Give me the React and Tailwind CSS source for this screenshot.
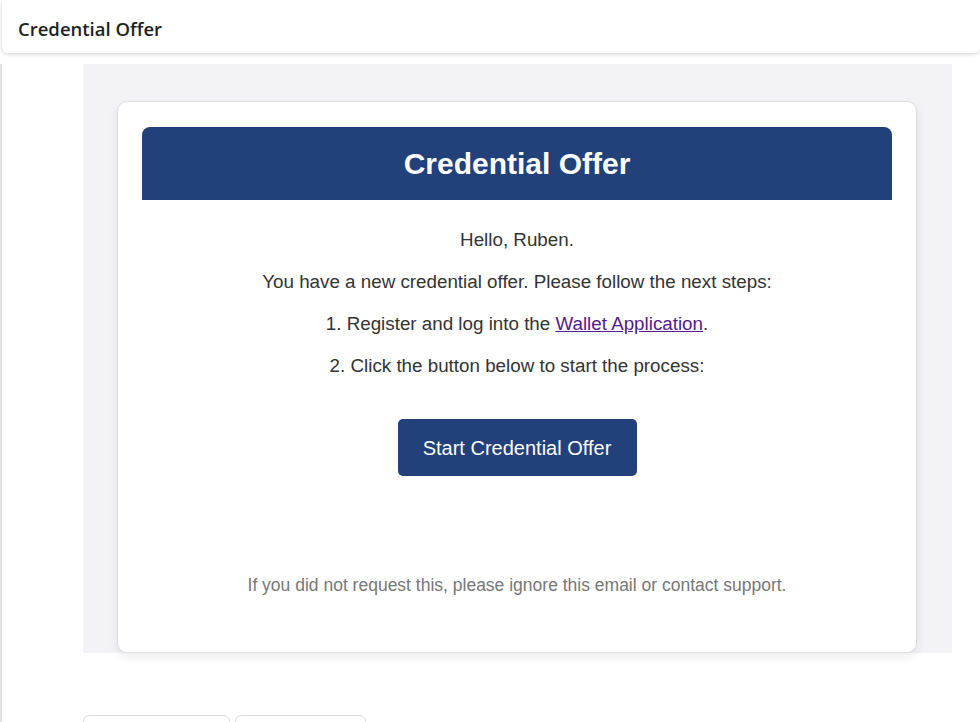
export default function App() {
  return (
    <div className="min-h-[722px] bg-white font-['Liberation_Sans',Arial,sans-serif]">
      {/* Top bar */}
      <div className="ml-[2px] h-[53px] flex items-center px-4 pt-[5px] bg-white rounded-b-md shadow-[0_1px_4px_rgba(0,0,0,0.18)] relative z-10">
        <h1 className="text-[18.5px] font-semibold text-[#1f1f1f] font-['Open_Sans','Noto_Sans',sans-serif]">Credential Offer</h1>
      </div>

      <div className="mt-[11px] border-l-2 border-[#e3e3e3] min-h-[658px]">
        <div className="ml-[81px] w-[869px] bg-[#f3f3f7] pt-[37px] pl-[34px] pr-[35px]">
          {/* Email card */}
          <div className="bg-white rounded-[10px] border border-[#dedede] shadow-[0_4px_10px_rgba(0,0,0,0.08)] h-[552px] px-[24px] pt-[25px]">
            <div className="bg-[#22417a] rounded-t-[8px] h-[73px] flex items-center justify-center">
              <h2 className="text-white text-[30px] font-bold">Credential Offer</h2>
            </div>
            <div className="flex flex-col items-center text-[#333] text-[18.8px] leading-[26px] pt-[27px] gap-[16px]">
              <p>Hello, Ruben.</p>
              <p>You have a new credential offer. Please follow the next steps:</p>
              <p>
                1. Register and log into the{' '}
                <a href="#" className="text-[#551a8b] underline">Wallet Application</a>.
              </p>
              <p>2. Click the button below to start the process:</p>
              <button className="mt-[24px] w-[239px] h-[57px] bg-[#22417a] text-white text-[20px] rounded-[5px]">
                Start Credential Offer
              </button>
              <p className="mt-[80px] text-[17.5px] text-[#777]">
                If you did not request this, please ignore this email or contact support.
              </p>
            </div>
          </div>
        </div>

        {/* Bottom buttons */}
        <div className="ml-[81px] mt-[62px] flex gap-[5px]">
          <div className="w-[147px] h-[20px] border border-[#dedede] rounded-t-[6px]"></div>
          <div className="w-[131px] h-[20px] border border-[#dedede] rounded-t-[6px]"></div>
        </div>
      </div>
    </div>
  )
}
